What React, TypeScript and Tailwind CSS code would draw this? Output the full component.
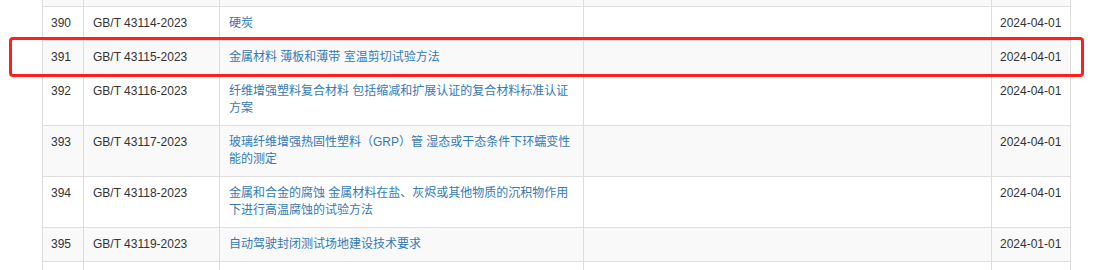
const rows = [
  { no: "", code: "", title: "", date: "" },
  { no: "390", code: "GB/T 43114-2023", title: "硬炭", date: "2024-04-01" },
  { no: "391", code: "GB/T 43115-2023", title: "金属材料 薄板和薄带 室温剪切试验方法", date: "2024-04-01" },
  { no: "392", code: "GB/T 43116-2023", title: "纤维增强塑料复合材料 包括缩减和扩展认证的复合材料标准认证方案", date: "2024-04-01" },
  { no: "393", code: "GB/T 43117-2023", title: "玻璃纤维增强热固性塑料（GRP）管 湿态或干态条件下环蠕变性能的测定", date: "2024-04-01" },
  { no: "394", code: "GB/T 43118-2023", title: "金属和合金的腐蚀 金属材料在盐、灰烬或其他物质的沉积物作用下进行高温腐蚀的试验方法", date: "2024-04-01" },
  { no: "395", code: "GB/T 43119-2023", title: "自动驾驶封闭测试场地建设技术要求", date: "2024-01-01" },
  { no: "", code: "", title: "", date: "" },
];

export default function App() {
  return (
    <div
      className="relative h-[270px] w-[1102px] overflow-hidden bg-white pl-[42px] text-[12px] leading-[17px] text-[#333]"
      style={{ fontFamily: '"Liberation Sans", Arial, "Noto Sans CJK SC", sans-serif' }}
    >
      <table className="-mt-[28px] w-[1028px] table-fixed border-collapse">
        <colgroup>
          <col className="w-[41px]" />
          <col className="w-[136px]" />
          <col className="w-[364px]" />
          <col className="w-[408px]" />
          <col className="w-[79px]" />
        </colgroup>
        <tbody>
          {rows.map((r, i) => (
            <tr key={i} className={i % 2 === 0 ? "bg-[#f9f9f9]" : "bg-white"}>
              <td className="h-[34px] border border-[#ddd] px-2 py-2 align-top">{r.no}</td>
              <td className="border border-[#ddd] py-2 pl-[9px] pr-2 align-top">{r.code}</td>
              <td className="border border-[#ddd] py-2 pl-[9px] pr-2 align-top">
                <a className="text-[#337ab7]">{r.title}</a>
              </td>
              <td className="border border-[#ddd] px-2 py-2 align-top" />
              <td className="border border-[#ddd] px-2 py-2 align-top">{r.date}</td>
            </tr>
          ))}
        </tbody>
      </table>

      {/* highlight annotation */}
      <div className="pointer-events-none absolute left-[9px] top-[37px] h-[40px] w-[1075px] rounded-[4px] border-[3px] border-[#ff1f1f]" />
    </div>
  );
}
